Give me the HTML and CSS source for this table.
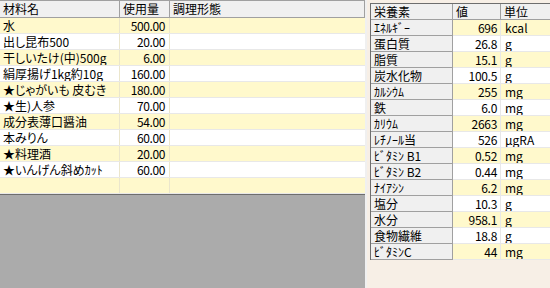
FILE: index.html
```html
<!DOCTYPE html>
<html lang="ja">
<head>
<meta charset="utf-8">
<link rel="stylesheet" href="styles.css">
</head>
<body>
<div class="app">
  <div class="left">
    <div class="lgrid">
      <div class="lrow head">
        <div class="c1">材料名</div><div class="c2 hl">使用量</div><div class="c3">調理形態</div>
      </div>
      <div class="lrow y"><div class="c1">水</div><div class="c2">500.00</div><div class="c3"></div></div>
      <div class="lrow"><div class="c1">出し昆布500</div><div class="c2">20.00</div><div class="c3"></div></div>
      <div class="lrow y"><div class="c1">干しいたけ(中)500g</div><div class="c2">6.00</div><div class="c3"></div></div>
      <div class="lrow"><div class="c1">絹厚揚げ1kg約10g</div><div class="c2">160.00</div><div class="c3"></div></div>
      <div class="lrow y"><div class="c1">★じゃがいも 皮むき</div><div class="c2">180.00</div><div class="c3"></div></div>
      <div class="lrow"><div class="c1">★生)人参</div><div class="c2">70.00</div><div class="c3"></div></div>
      <div class="lrow y"><div class="c1">成分表薄口醤油</div><div class="c2">54.00</div><div class="c3"></div></div>
      <div class="lrow"><div class="c1">本みりん</div><div class="c2">60.00</div><div class="c3"></div></div>
      <div class="lrow y"><div class="c1">★料理酒</div><div class="c2">20.00</div><div class="c3"></div></div>
      <div class="lrow"><div class="c1">★いんげん斜め<span class="hw">ｶｯﾄ</span></div><div class="c2">60.00</div><div class="c3"></div></div>
      <div class="lrow y"><div class="c1"></div><div class="c2"></div><div class="c3"></div></div>
    </div>
  </div>
  <div class="right">
    <div class="ntable">
      <div class="nrow head"><div class="n1">栄養素</div><div class="n2">値</div><div class="n3">単位</div></div>
      <div class="nrow y"><div class="n1">ｴﾈﾙｷﾞｰ</div><div class="n2">696</div><div class="n3">kcal</div></div>
      <div class="nrow"><div class="n1">蛋白質</div><div class="n2">26.8</div><div class="n3">g</div></div>
      <div class="nrow y"><div class="n1">脂質</div><div class="n2">15.1</div><div class="n3">g</div></div>
      <div class="nrow"><div class="n1">炭水化物</div><div class="n2">100.5</div><div class="n3">g</div></div>
      <div class="nrow y"><div class="n1">ｶﾙｼｳﾑ</div><div class="n2">255</div><div class="n3">mg</div></div>
      <div class="nrow"><div class="n1">鉄</div><div class="n2">6.0</div><div class="n3">mg</div></div>
      <div class="nrow y"><div class="n1">ｶﾘｳﾑ</div><div class="n2">2663</div><div class="n3">mg</div></div>
      <div class="nrow"><div class="n1">ﾚﾁﾉｰﾙ当</div><div class="n2">526</div><div class="n3">μgRA</div></div>
      <div class="nrow y"><div class="n1">ﾋﾞﾀﾐﾝ B1</div><div class="n2">0.52</div><div class="n3">mg</div></div>
      <div class="nrow"><div class="n1">ﾋﾞﾀﾐﾝ B2</div><div class="n2">0.44</div><div class="n3">mg</div></div>
      <div class="nrow y"><div class="n1">ﾅｲｱｼﾝ</div><div class="n2">6.2</div><div class="n3">mg</div></div>
      <div class="nrow"><div class="n1">塩分</div><div class="n2">10.3</div><div class="n3">g</div></div>
      <div class="nrow y"><div class="n1">水分</div><div class="n2">958.1</div><div class="n3">g</div></div>
      <div class="nrow"><div class="n1">食物繊維</div><div class="n2">18.8</div><div class="n3">g</div></div>
      <div class="nrow y"><div class="n1">ﾋﾞﾀﾐﾝC</div><div class="n2">44</div><div class="n3">mg</div></div>
    </div>
  </div>
</div>
</body>
</html>
```

FILE: styles.css
```css
html, body {
  margin: 0;
  padding: 0;
}
body {
  width: 550px;
  height: 288px;
  overflow: hidden;
  background: #f7efe6;
  font-family: "Noto Sans CJK JP", "Liberation Sans", sans-serif;
  font-size: 12px;
  color: #000;
}
.app {
  display: flex;
  height: 288px;
}
.left {
  width: 365px;
  height: 288px;
  background: #ababab;
  border-right: 2px solid #f0f0f0;
  flex: none;
}
.lgrid {
  background: #fff;
  border-top: 1px solid #a0a0a0;
  border-bottom: 1px solid #6e6e6e;
}
.lrow {
  display: flex;
  height: 16px;
  box-sizing: border-box;
  border-bottom: 1px solid #e8e8e8;
  line-height: 15px;
  background: #fff;
}
.lrow.y { background: #fff9cc; }
.lrow > div {
  box-sizing: border-box;
  border-right: 1px solid #ebe6cc;
  white-space: nowrap;
  overflow: hidden;
}
.lrow .c1 { width: 120px; padding-left: 3px; font-feature-settings: "palt"; }
.lrow .c1 .hw { font-feature-settings: normal; }
.lrow .c2 { width: 50px; text-align: right; padding-right: 4px; letter-spacing: -0.4px; }
.lrow .c3 { flex: 1; border-right: none; }
.lrow.head {
  height: 17px;
  line-height: 16px;
  background: #f0f0f0;
  border-bottom: 1px solid #a0a0a0;
}
.lrow.head > div { border-right: 1px solid #a0a0a0; }
.lrow.head .c2 { text-align: left; padding-left: 3px; padding-right: 0; letter-spacing: 0; }
.lrow.head .c3 { padding-left: 3px; border-right: 1px solid #a0a0a0; }

.right {
  padding: 3px 0 0 3px;
}
.ntable {
  width: 179px;
  border-top: 1px solid #6e6e6e;
  border-left: 1px solid #6e6e6e;
  border-right: 1px solid #d0d0d0;
}
.nrow {
  display: flex;
  height: 16px;
  line-height: 15px;
  background: #fff;
}
.nrow.y { background: #fff9cc; }
.nrow > div {
  box-sizing: border-box;
  height: 16px;
  white-space: nowrap;
  overflow: hidden;
  border-bottom: 1px solid #e8e8e8;
}
.nrow .n1 {
  width: 82px;
  padding-left: 3px;
  background: #f0f0f0;
  border-right: 1px solid #a0a0a0;
  border-bottom: 1px solid #a0a0a0;
}
.nrow .n2 {
  width: 48px;
  text-align: right;
  padding-right: 3px;
  border-right: 1px solid #e8e8e8;
  letter-spacing: -0.3px;
}
.nrow .n3 {
  flex: 1;
  padding-left: 4px;
}
.nrow.head { background: #f0f0f0; }
.nrow.head > div {
  border-bottom: 1px solid #a0a0a0;
  border-right: 1px solid #a0a0a0;
  text-align: left;
  padding-left: 3px;
  padding-right: 0;
  letter-spacing: 0;
}
.nrow.head .n3 { border-right: none; }
```
